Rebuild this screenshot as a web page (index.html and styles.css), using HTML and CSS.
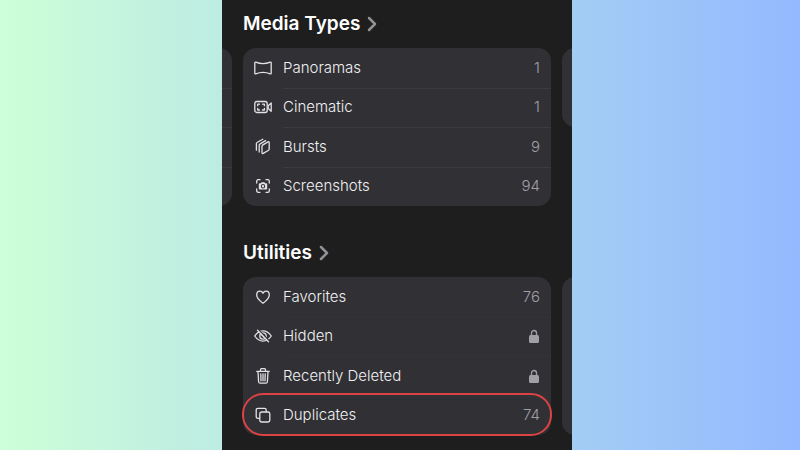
FILE: index.html
```
<!DOCTYPE html>
<html lang="en">

<head>
    <meta charset="UTF-8">
    <meta name="viewport" content="width=device-width, initial-scale=1.0">
    <title>Photos</title>
    <link rel="stylesheet" href="styles.css">
</head>

<body>
    <main class="phone">
        <section class="section">
            <h2><a href="#media-types">Media Types
                <svg class="chevron" viewBox="0 0 10 16"><path d="M2 2l6 6-6 6" /></svg></a></h2>
            <div class="carousel">
                <div class="card edge edge-left">
                    <div></div>
                    <div></div>
                    <div></div>
                    <div></div>
                </div>
                <ul class="card list" id="media-types">
                    <li><a class="row" href="#panoramas">
                        <svg class="icon" viewBox="0 0 18 18"><path d="M.8 3.800Q.8 2.900 1.700 3.200Q9 6.200 16.300 3.200Q17.200 2.900 17.200 3.800V14.200Q17.200 15.100 16.300 14.800Q9 11.800 1.700 14.800Q.8 15.100 .8 14.200Z" /></svg>
                        <span class="label">Panoramas</span><span class="count">1</span>
                    </a></li>
                    <li><a class="row" href="#cinematic">
                        <svg class="icon" viewBox="0 0 18 18"><rect x=".8" y="3.500" width="12.400" height="11" rx="2" /><path d="M3.700 7.700V6.200H5.500M8.500 6.200h1.900v1.500M10.400 10.400v1.600H8.500M5.500 12H3.700v-1.600M14.200 7.700l3-2.800v8.400l-3-2.800z" /></svg>
                        <span class="label">Cinematic</span><span class="count">1</span>
                    </a></li>
                    <li><a class="row" href="#bursts">
                        <svg class="icon" viewBox="0 0 18 18"><path d="M8 8.200q0-.7.6-1.100l5.400-3.200q1.200-.6 1.200.6v6.600q0 .8-.6 1.100l-5.400 3.200Q8 16 8 14.800zM5.200 14V7.200q0-.8.6-1.100L11.600 2.600M2.400 12.200V5.600q0-.8.6-1.100L8.800 1.300" /></svg>
                        <span class="label">Bursts</span><span class="count">9</span>
                    </a></li>
                    <li><a class="row" href="#screenshots">
                        <svg class="icon" viewBox="0 0 18 18"><path d="M2.700 6V4.300q0-1.600 1.600-1.600H6M12 2.700h1.700q1.600 0 1.600 1.600V6M15.300 12v1.700q0 1.600-1.600 1.600H12M6 15.300H4.300q-1.600 0-1.600-1.600V12" /><path class="solid" fill-rule="evenodd" d="M5.800 6.300h1l.8-1h2.800l.8 1h1q1 0 1 1v4.200q0 1-1 1H5.800q-1 0-1-1V7.300q0-1 1-1zM9 7.100a2.200 2.200 0 1 0 0 4.400a2.200 2.200 0 1 0 0-4.400zM9 8.100a1.200 1.200 0 1 1 0 2.400a1.200 1.200 0 1 1 0-2.400z" /></svg>
                        <span class="label">Screenshots</span><span class="count">94</span>
                    </a></li>
                </ul>
                <div class="card edge edge-right short"></div>
            </div>
        </section>

        <section class="section">
            <h2><a href="#utilities">Utilities
                <svg class="chevron" viewBox="0 0 10 16"><path d="M2 2l6 6-6 6" /></svg></a></h2>
            <div class="carousel">
                <div class="edge edge-left"></div>
                <ul class="card list faint" id="utilities">
                    <li><a class="row" href="#favorites">
                        <svg class="icon" viewBox="0 0 18 18"><path d="M9 15.200C6 13 2.700 10.200 2.700 6.900C2.700 4.700 4.200 3.200 6 3.200C7.400 3.200 8.400 3.900 9 5.200C9.600 3.900 10.600 3.200 12 3.200C13.800 3.200 15.300 4.700 15.300 6.900C15.300 10.200 12 13 9 15.200Z" /></svg>
                        <span class="label">Favorites</span><span class="count">76</span>
                    </a></li>
                    <li><a class="row" href="#hidden">
                        <svg class="icon" viewBox="0 0 18 18"><path d="M.7 9Q4.300 3.900 9 3.900T17.300 9Q13.700 14.100 9 14.100T.7 9Z" /><circle cx="9" cy="9" r="3.200" /><path d="M7.600 7.800l2.600 2.600" /><path class="gap" d="M4.500 2.700L15 13.800" /><path d="M3.500 3.200L14.500 14.800" /></svg>
                        <span class="label">Hidden</span>
                        <svg class="lock" viewBox="0 0 10 14" role="img" aria-label="Locked"><path d="M2.500 7V4a2.500 2.500 0 0 1 5 0V7" /><rect x="0" y="6" width="10" height="8" rx="1.500" /></svg>
                    </a></li>
                    <li><a class="row" href="#recently-deleted">
                        <svg class="icon" viewBox="0 0 18 18"><path d="M2.800 4.400H15.200M6.500 4.200V2.700q0-1 1-1h3q1 0 1 1V4.200M4 4.600l.6 10.100q.1 1.500 1.500 1.500h5.800q1.400 0 1.500-1.500L14 4.600M6.800 6.800l.2 7M9 6.800v7M11.200 6.800l-.2 7" /></svg>
                        <span class="label">Recently Deleted</span>
                        <svg class="lock" viewBox="0 0 10 14" role="img" aria-label="Locked"><path d="M2.500 7V4a2.500 2.500 0 0 1 5 0V7" /><rect x="0" y="6" width="10" height="8" rx="1.500" /></svg>
                    </a></li>
                    <li class="highlighted"><a class="row" href="#duplicates">
                        <svg class="icon" viewBox="0 0 18 18"><rect x="5.800" y="6" width="10" height="10" rx="1.700" /><path d="M5.500 12.300H3.900q-1.700 0-1.700-1.700V4q0-1.700 1.700-1.700h6.600q1.700 0 1.700 1.700V5.700" /></svg>
                        <span class="label">Duplicates</span><span class="count">74</span>
                    </a></li>
                </ul>
                <div class="card edge edge-right"></div>
            </div>
        </section>
    </main>
</body>

</html>
```
FILE: styles.css
```
* {
    box-sizing: border-box;
}

body {
    margin: 0;
    min-height: 100vh;
    display: grid;
    grid-template-columns: 222fr 350fr 228fr;
    background: linear-gradient(to right, #cdffd8, #94b9ff);
    font-family: Inter, "Liberation Sans", sans-serif;
    color: #f0f0f2;
}

a {
    color: inherit;
    text-decoration: none;
}

.phone {
    grid-column: 2;
    overflow: hidden;
    background-color: #1e1e1e;
    padding: 9px 0 14px;
    display: flex;
    flex-direction: column;
    gap: 32px;
}

h2 {
    margin: 0 0 9px 21px;
    font-size: 19px;
    line-height: 30px;
    font-weight: 600;
    color: #fff;
}

h2 a {
    display: inline-flex;
    align-items: center;
    gap: 7px;
}

.chevron {
    width: 10px;
    height: 16px;
    fill: none;
    stroke: #919196;
    stroke-width: 2.5;
    stroke-linecap: round;
    stroke-linejoin: round;
}

.carousel {
    display: flex;
    gap: 11px;
}

.card {
    background-color: #313035;
    border-radius: 13px;
}

.list {
    flex: 1;
    margin: 0;
    padding: 0;
    list-style: none;
}

.list,
.edge {
    min-height: 158px;
    display: grid;
    grid-auto-rows: 1fr;
}

/* neighbouring cards peek in from both sides */
.edge {
    width: 40px;
}

.edge-left {
    margin-left: -30px;
}

.edge-right {
    margin-right: -30px;
}

.short {
    min-height: 79px;
    align-self: flex-start;
}

.edge div + div {
    border-top: 1px solid #3c3b40;
}

.list li {
    position: relative;
    display: grid;
}

.row {
    display: flex;
    align-items: center;
    gap: 11px;
    padding: 0 11px;
    font-size: 15px;
    font-weight: 300;
    line-height: 20px;
}

/* divider starts under the label */
.list li + li::before {
    content: "";
    position: absolute;
    top: 0;
    left: 40px;
    right: 0;
    height: 1px;
    background-color: #3c3b40;
}

.faint li + li::before {
    background-color: #343338;
}

.icon {
    width: 18px;
    height: 18px;
    fill: none;
    stroke: #e2e2e4;
    stroke-width: 1.3;
    stroke-linecap: round;
    stroke-linejoin: round;
}

.icon .solid {
    fill: #e2e2e4;
    stroke: none;
}

.icon .gap {
    stroke: #313035;
}

.label {
    flex: 1;
}

.count {
    color: #a09fa5;
}

.lock {
    width: 10px;
    height: 14px;
    margin-right: 1px;
    fill: #a09fa5;
}

.lock path {
    fill: none;
    stroke: #a09fa5;
    stroke-width: 1.3;
}

.highlighted::after {
    content: "";
    position: absolute;
    inset: -3px -1px -1px;
    border: 2px solid #dc4345;
    border-radius: 21px;
    pointer-events: none;
}
```
